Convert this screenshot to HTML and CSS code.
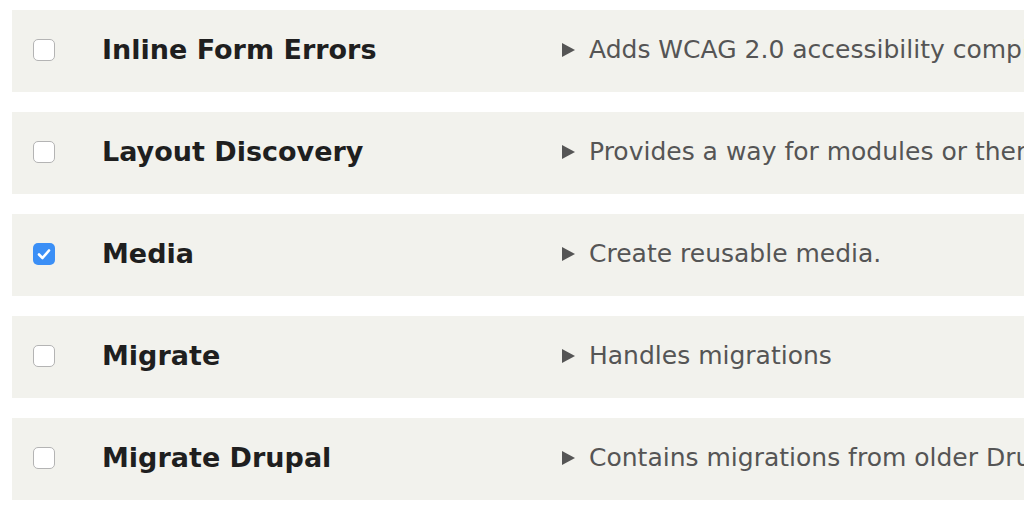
FILE: index.html
```html
<!DOCTYPE html>
<html>
<head>
<meta charset="utf-8">
<link rel="stylesheet" href="styles.css">
</head>
<body>
<div class="list">
  <div class="row">
    <span class="cb"></span>
    <span class="title">Inline Form Errors</span>
    <span class="tri"></span>
    <span class="desc">Adds WCAG 2.0 accessibility compliance for form errors.</span>
  </div>
  <div class="row">
    <span class="cb"></span>
    <span class="title">Layout Discovery</span>
    <span class="tri"></span>
    <span class="desc">Provides a way for modules or themes to register layouts.</span>
  </div>
  <div class="row">
    <span class="cb checked"><svg viewBox="0 0 22 22" width="22" height="22"><path d="M6 11.5 L9.5 15 L16 7.5" fill="none" stroke="#fff" stroke-width="2.6" stroke-linecap="round" stroke-linejoin="round"/></svg></span>
    <span class="title">Media</span>
    <span class="tri"></span>
    <span class="desc">Create reusable media.</span>
  </div>
  <div class="row">
    <span class="cb"></span>
    <span class="title">Migrate</span>
    <span class="tri"></span>
    <span class="desc">Handles migrations</span>
  </div>
  <div class="row">
    <span class="cb"></span>
    <span class="title">Migrate Drupal</span>
    <span class="tri"></span>
    <span class="desc">Contains migrations from older Drupal versions.</span>
  </div>
</div>
</body>
</html>
```
FILE: styles.css
```css
html, body {
  margin: 0;
  padding: 0;
  background: #fff;
  overflow: hidden;
}
body {
  font-family: "DejaVu Sans", "Lucida Grande", sans-serif;
}
.list {
  padding: 10px 0 0 12px;
  display: flex;
  flex-direction: column;
  gap: 20px;
}
.row {
  height: 82px;
  box-sizing: border-box;
  padding-bottom: 3px;
  background: #f2f2ed;
  display: flex;
  align-items: center;
  padding-left: 21px;
  white-space: nowrap;
  overflow: hidden;
}
.cb {
  width: 22px;
  height: 22px;
  box-sizing: border-box;
  border: 1.5px solid #b4b4b4;
  border-radius: 5px;
  background: #fff;
  margin-right: 47px;
  flex: none;
  display: flex;
}
.cb.checked {
  background: #3b8ff6;
  border: none;
}
.title {
  width: 460px;
  flex: none;
  font-weight: bold;
  font-size: 27px;
  color: #1f1f1f;
}
.tri {
  flex: none;
  width: 0;
  height: 0;
  border-top: 7.5px solid transparent;
  border-bottom: 7.5px solid transparent;
  border-left: 13px solid #555;
  margin-right: 14px;
}
.desc {
  font-size: 25px;
  color: #555;
}
```
